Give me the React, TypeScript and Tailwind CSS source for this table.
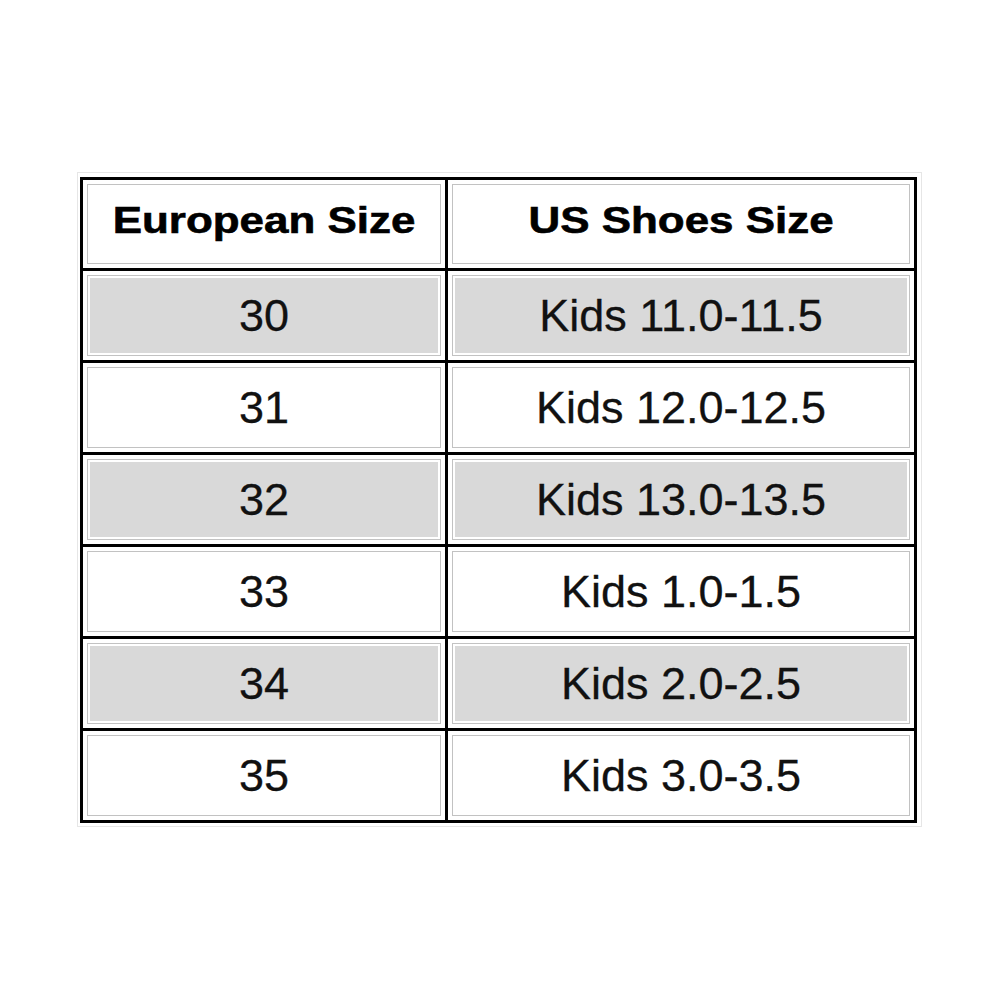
const rows = [
  { eu: "30", us: "Kids 11.0-11.5" },
  { eu: "31", us: "Kids 12.0-12.5" },
  { eu: "32", us: "Kids 13.0-13.5" },
  { eu: "33", us: "Kids 1.0-1.5" },
  { eu: "34", us: "Kids 2.0-2.5" },
  { eu: "35", us: "Kids 3.0-3.5" },
];

function Cell({ children, shaded }: { children: React.ReactNode; shaded?: boolean }) {
  return (
    <div className="bg-white p-[4px]">
      <div className="h-full border border-[#c2c2c2] bg-white p-[2px]">
        <div
          className={
            shaded
              ? "flex h-full items-center justify-center bg-[#d9d9d9]"
              : "flex h-full items-center justify-center bg-white"
          }
        >
          {children}
        </div>
      </div>
    </div>
  );
}

function HeaderText({ children }: { children: React.ReactNode }) {
  return (
    <span className="-mt-[6px] inline-block scale-x-[1.22] font-['Liberation_Sans',Arial,sans-serif] text-[36px] font-bold leading-none text-black [-webkit-text-stroke:0.6px_black]">
      {children}
    </span>
  );
}

function BodyText({ children }: { children: React.ReactNode }) {
  return (
    <span className="font-['Liberation_Sans',Arial,sans-serif] text-[45px] leading-none text-[#111] [-webkit-text-stroke:0.3px_#111]">
      {children}
    </span>
  );
}

export default function App() {
  return (
    <div className="h-[1000px] w-[1000px] bg-white pl-[77px] pt-[172px]">
      <div className="inline-block border border-[#e6e6e6] pb-[3px] pl-[2px] pr-[4px] pt-[4px]">
        <div className="grid grid-cols-[362px_466px] grid-rows-[88px_repeat(6,89px)] gap-[3px] bg-black p-[3px]">
          <Cell>
            <HeaderText>European Size</HeaderText>
          </Cell>
          <Cell>
            <HeaderText>US Shoes Size</HeaderText>
          </Cell>
          {rows.map((r, i) => (
            <>
              <Cell key={r.eu + "a"} shaded={i % 2 === 0}>
                <BodyText>{r.eu}</BodyText>
              </Cell>
              <Cell key={r.eu + "b"} shaded={i % 2 === 0}>
                <BodyText>{r.us}</BodyText>
              </Cell>
            </>
          ))}
        </div>
      </div>
    </div>
  );
}
